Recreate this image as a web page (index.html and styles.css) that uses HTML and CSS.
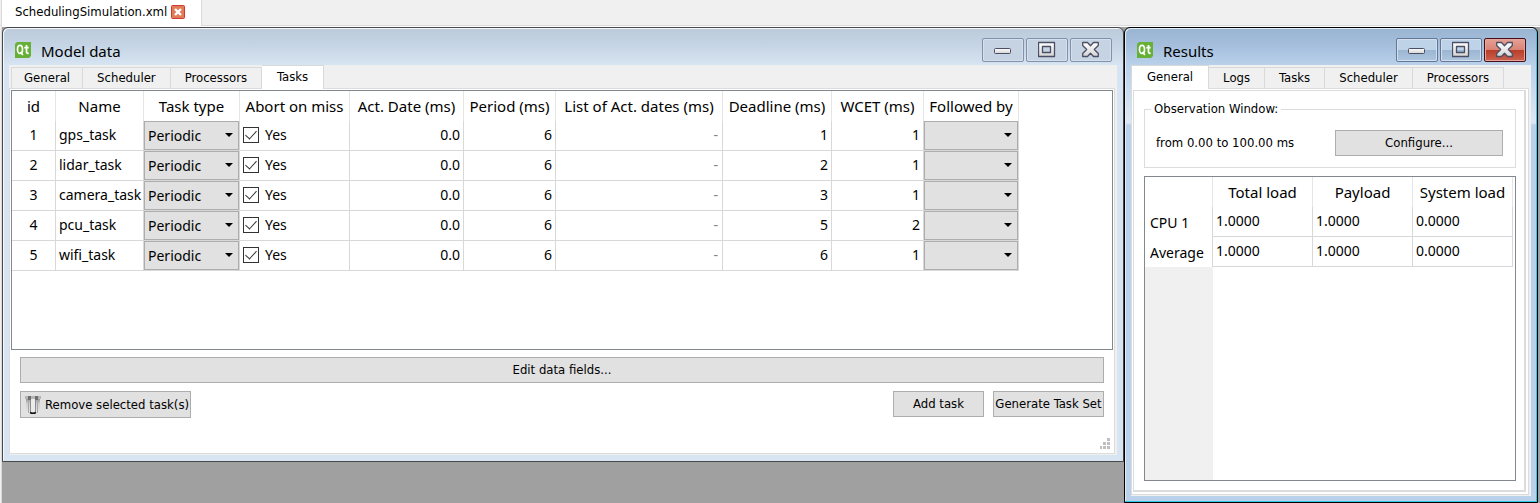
FILE: index.html
```html
<!DOCTYPE html>
<html lang="en">
<head>
<meta charset="utf-8">
<title>SchedulingSimulation.xml</title>
<link rel="stylesheet" href="styles.css">
</head>
<body>
<svg class="defs" aria-hidden="true">
  <defs>
    <linearGradient id="metal" x1="0" y1="0" x2="0" y2="1"><stop offset="0" stop-color="#fff"/><stop offset="1" stop-color="#d4d4d4"/></linearGradient>
    <linearGradient id="bin-body" x1="0" y1="0" x2="0" y2="1"><stop offset="0" stop-color="#8a8a8a"/><stop offset=".35" stop-color="#cfcfcf"/><stop offset="1" stop-color="#e8e8e8"/></linearGradient>
    <symbol id="qt" viewBox="0 0 16 16"><path d="M2 0h14v14l-2 2H0V2z" fill="#66b036"/><g fill="none" stroke="#fff" stroke-width="1.7"><ellipse cx="5" cy="7.400" rx="2.500" ry="4"/><path d="M5.500 10l2.400 3"/><path d="M11.500 3v7q0 1.600 2.200 1.200M9.300 5.700h4.400"/></g></symbol>
    <symbol id="min" viewBox="0 0 18 18"><rect x=".5" y="7.500" width="16" height="5" rx="1" fill="url(#metal)" stroke="#4c4f63"/></symbol>
    <symbol id="max" viewBox="0 0 18 18"><path d="M.5 1.500h16v14h-16zM4.500 5.500v6h8v-6z" fill="url(#metal)" fill-rule="evenodd" stroke="#4c4f63" stroke-width="1.300" stroke-linejoin="round"/></symbol>
    <symbol id="cross" viewBox="0 0 18 18"><path d="M.7 1.500h4.800L8.500 4.700l3-3.200h4.800v3L12.300 8.500l4 4v3h-4.800l-3-3.200-3 3.200H.7v-3l4-4-4-4z" fill="url(#metal)" stroke="#4c4f63" stroke-width="1.300" stroke-linejoin="round"/></symbol>
  </defs>
</svg>
<header class="documents">
  <div class="document">
    <span>SchedulingSimulation.xml</span>
    <button class="document-close" aria-label="Close document"><svg viewBox="0 0 14 14"><rect x=".5" y=".5" width="13" height="13" rx="1" fill="#e27c58" stroke="#d0382e"/><path d="M4 4l6 6M10 4l-6 6" stroke="#fff" stroke-width="2.400"/></svg></button>
  </div>
</header>
<main class="desktop">
  <section class="window model" aria-label="Model data">
    <div class="titlebar">
      <svg class="logo"><use href="#qt"/></svg>
      <h1>Model data</h1>
      <div class="controls">
        <button aria-label="Minimize"><svg><use href="#min"/></svg></button>
        <button aria-label="Maximize"><svg><use href="#max"/></svg></button>
        <button aria-label="Close"><svg><use href="#cross"/></svg></button>
      </div>
    </div>
    <div class="client">
      <div class="tabs" role="tablist">
        <button role="tab">General</button><button role="tab">Scheduler</button><button role="tab">Processors</button><button role="tab" aria-selected="true">Tasks</button>
      </div>
      <div class="pane">
        <div class="frame task-frame">
          <table class="grid tasks">
            <colgroup><col class="c-id"><col class="c-name"><col class="c-type"><col class="c-abort"><col class="c-act"><col class="c-period"><col class="c-list"><col class="c-deadline"><col class="c-wcet"><col class="c-follow"></colgroup>
            <thead><tr><th>id</th><th>Name</th><th>Task type</th><th>Abort on miss</th><th>Act. Date (ms)</th><th>Period (ms)</th><th>List of Act. dates (ms)</th><th>Deadline (ms)</th><th>WCET (ms)</th><th>Followed by</th></tr></thead>
            <tbody>
              <tr><td class="center">1</td><td>gps_task</td><td class="field"><div class="combo"><select aria-label="Task type 1"><option>Periodic</option></select></div></td><td class="abort"><label><input type="checkbox" checked>Yes</label></td><td class="num">0.0</td><td class="num">6</td><td class="num none">-</td><td class="num">1</td><td class="num">1</td><td class="field"><div class="combo"><select aria-label="Followed by 1"><option></option></select></div></td></tr>
              <tr><td class="center">2</td><td>lidar_task</td><td class="field"><div class="combo"><select aria-label="Task type 2"><option>Periodic</option></select></div></td><td class="abort"><label><input type="checkbox" checked>Yes</label></td><td class="num">0.0</td><td class="num">6</td><td class="num none">-</td><td class="num">2</td><td class="num">1</td><td class="field"><div class="combo"><select aria-label="Followed by 2"><option></option></select></div></td></tr>
              <tr><td class="center">3</td><td>camera_task</td><td class="field"><div class="combo"><select aria-label="Task type 3"><option>Periodic</option></select></div></td><td class="abort"><label><input type="checkbox" checked>Yes</label></td><td class="num">0.0</td><td class="num">6</td><td class="num none">-</td><td class="num">3</td><td class="num">1</td><td class="field"><div class="combo"><select aria-label="Followed by 3"><option></option></select></div></td></tr>
              <tr><td class="center">4</td><td>pcu_task</td><td class="field"><div class="combo"><select aria-label="Task type 4"><option>Periodic</option></select></div></td><td class="abort"><label><input type="checkbox" checked>Yes</label></td><td class="num">0.0</td><td class="num">6</td><td class="num none">-</td><td class="num">5</td><td class="num">2</td><td class="field"><div class="combo"><select aria-label="Followed by 4"><option></option></select></div></td></tr>
              <tr><td class="center">5</td><td>wifi_task</td><td class="field"><div class="combo"><select aria-label="Task type 5"><option>Periodic</option></select></div></td><td class="abort"><label><input type="checkbox" checked>Yes</label></td><td class="num">0.0</td><td class="num">6</td><td class="num none">-</td><td class="num">6</td><td class="num">1</td><td class="field"><div class="combo"><select aria-label="Followed by 5"><option></option></select></div></td></tr>
            </tbody>
          </table>
        </div>
        <div class="actions">
          <button class="push wide">Edit data fields...</button>
          <div class="action-row">
            <button class="push remove"><svg class="bin" viewBox="0 0 16 20"><path d="M1 3h14v16H1z" fill="url(#bin-body)"/><path d="M0 1h16v3H0z" fill="#b5b5b5"/><path d="M3 1h3v4H3zM10 1h3v4h-3z" fill="#6e6e6e"/><path d="M6 4h4v13H6z" fill="#ececec"/><path d="M3.500 5v13M12.500 5v13" stroke="#a8a8a8"/><path d="M5.500 5v12M10.500 5v12" stroke="#8c8c8c"/><path d="M5 17.500q3 1.500 6 0" fill="none" stroke="#111" stroke-width="1.500"/></svg>Remove selected task(s)</button>
            <button class="push add">Add task</button>
            <button class="push generate">Generate Task Set</button>
          </div>
        </div>
        <svg class="grip" viewBox="0 0 11 11" aria-hidden="true"><path d="M8 0h3v3H8zM4 4h3v3H4zM8 4h3v3H8zM1 8h2v3H1zM4 8h3v3H4zM8 8h3v3H8z" fill="#bfbfbf"/></svg>
      </div>
    </div>
  </section>
  <section class="window results" aria-label="Results">
    <div class="titlebar">
      <svg class="logo"><use href="#qt"/></svg>
      <h2>Results</h2>
      <div class="controls">
        <button aria-label="Minimize"><svg><use href="#min"/></svg></button>
        <button aria-label="Maximize"><svg><use href="#max"/></svg></button>
        <button class="danger" aria-label="Close"><svg><use href="#cross"/></svg></button>
      </div>
    </div>
    <div class="client">
      <div class="tabs" role="tablist">
        <button role="tab" aria-selected="true">General</button><button role="tab">Logs</button><button role="tab">Tasks</button><button role="tab">Scheduler</button><button role="tab">Processors</button>
      </div>
      <div class="pane">
        <div class="page">
          <fieldset>
            <legend>Observation Window:</legend>
            <span>from 0.00 to 100.00 ms</span>
            <button class="push configure">Configure...</button>
          </fieldset>
          <div class="frame load-frame">
            <table class="grid loads">
              <colgroup><col class="c-cpu"><col class="c-load"><col class="c-load"><col class="c-load"></colgroup>
              <thead><tr><td class="corner"></td><th>Total load</th><th>Payload</th><th>System load</th></tr></thead>
              <tbody>
                <tr><th scope="row">CPU 1</th><td>1.0000</td><td>1.0000</td><td>0.0000</td></tr>
                <tr><th scope="row">Average</th><td>1.0000</td><td>1.0000</td><td>0.0000</td></tr>
              </tbody>
            </table>
            <div class="header-fill"></div>
          </div>
        </div>
      </div>
    </div>
  </section>
</main>
</body>
</html>
```
FILE: styles.css
```css
* { box-sizing: border-box; }
body {
  margin: 0;
  min-height: 100vh;
  display: flex;
  flex-direction: column;
  background: #f0f0f0;
  color: #000;
  font: 13px/16px "DejaVu Sans Condensed", "Noto Sans", sans-serif;
}
button, select, input { font: inherit; color: inherit; margin: 0; }
svg { display: block; }
.defs { position: absolute; width: 0; height: 0; }

.documents { display: flex; height: 26px; border-bottom: 1px solid #dadada; padding-left: 1px; }
.document {
  display: flex;
  align-items: center;
  gap: 4px;
  height: 26px;
  padding: 0 16px 2px 13px;
  background: #fff;
  border: solid #dadada;
  border-width: 0 1px;
}
.document-close { width: 14px; height: 14px; padding: 0; border: 0; background: none; }

.desktop {
  flex: 1;
  display: grid;
  grid-template-columns: 1122fr 414fr;
  align-items: start;
  margin-left: 1px;
  padding-right: 2px;
  background: #a0a0a0;
  border-left: 1px solid #dadada;
  border-top: 1px solid #fff;
}
.window {
  display: flex;
  flex-direction: column;
  min-width: 0;
  padding: 0 6px 6px;
  border: 1px solid #47474c;
  border-radius: 6px 6px 0 0;
}
.model {
  background: linear-gradient(#bccad9, #c6d5e5 18px, #d7e4f2 37px);
  box-shadow: inset 1px 1px #f5f8fb;
}
.results {
  align-self: stretch;
  border-color: #000;
  background: linear-gradient(#99b4d1, #a5bfdd 18px, #b9d1ea 37px, #dce8f5 95px, #b9d1ea 97px);
  box-shadow: inset -1px -1px #32c5e6, inset 1px 1px #e4edf6;
}
.titlebar { display: flex; align-items: center; height: 37px; padding: 8px 5px 0 6px; }
.logo { width: 16px; height: 16px; margin-bottom: 2px; }
.titlebar h1, .titlebar h2 { flex: 1; margin: 0 0 0 10px; font: 15px/20px "Noto Sans", sans-serif; }
.controls { display: flex; gap: 2px; margin-bottom: 2px; }
.controls button {
  display: grid;
  place-items: center;
  width: 42px;
  height: 24px;
  padding: 0;
  background: #c5d3e2;
  border: 1px solid #8091ab;
  border-radius: 2px;
  box-shadow: inset 0 0 0 1px #d5e0ec;
}
.controls svg { width: 18px; height: 18px; }
.results .controls button {
  background: linear-gradient(#bfd3e8 50%, #9bb6d2 50%, #aec6e0);
  border-color: #62789a;
}
.results .controls .danger {
  background: linear-gradient(#e5a195, #d98374 50%, #b83d28 50%, #cc6250);
  border-color: #45101c;
  box-shadow: inset 0 0 0 1px #e5a59b;
}

.client { flex: 1; display: flex; flex-direction: column; padding: 0 2px 1px 0; background: #f0f0f0; }
.tabs { display: flex; align-items: flex-end; height: 23px; padding-left: 2px; }
.tabs button {
  height: 21px;
  padding: 0 14px;
  background: #f0f0f0;
  border: solid #d9d9d9;
  border-width: 1px 1px 0 0;
  white-space: nowrap;
}
.tabs button:first-child { border-left-width: 1px; padding: 0 12px; }
.tabs button[aria-selected] { height: 24px; margin-bottom: -1px; padding: 0 15px 2px; background: #fff; z-index: 1; }
.results .tabs { padding-left: 0; }
.pane { flex: 1; display: flex; flex-direction: column; background: #fff; border: 1px solid #dcdcdc; padding: 1px; }
.results .pane { padding: 1px 2px 2px 1px; }
.page { flex: 1; display: flex; flex-direction: column; gap: 8px; padding: 10px 8px 9px 10px; border: solid #dcdcdc; border-width: 1px 2px 2px 1px; }

.frame { border: 1px solid #828790; background: #fff; }
.task-frame { height: 260px; }
.load-frame { flex: 1; display: flex; flex-direction: column; }
.header-fill { flex: 1; width: 68px; background: #f0f0f0; }
.grid { table-layout: fixed; border-collapse: separate; border-spacing: 0; font: 14px/20px "Noto Sans", sans-serif; }
.grid tr { height: 30px; }
.grid th, .grid td { height: 30px; padding: 0 3px 1px; border: solid #d8d8d8; border-width: 0 1px 1px 0; text-align: left; white-space: nowrap; font-weight: 400; }
.grid thead th { padding: 0; border-color: #e5e5e5; border-bottom: 0; font-size: 15px; text-align: center; }
.grid td.center { text-align: center; }
.grid td.num { text-align: right; }
.grid td.none { color: #808080; padding-right: 4px; }
.grid td.field { padding: 0; }
.tasks { width: 1007px; }
.c-id { width: 44px; } .c-name { width: 88px; } .c-type { width: 96px; }
.c-abort { width: 110px; } .c-act { width: 114px; } .c-period { width: 92px; }
.c-list { width: 167px; } .c-deadline { width: 109px; } .c-wcet { width: 92px; } .c-follow { width: 95px; }
.loads { width: 368px; }
.c-cpu { width: 68px; } .c-load { width: 100px; }
.grid td.corner { border-bottom: 0; border-color: #e5e5e5; }
.loads tbody th { padding: 2px 0 0 5px; border-bottom: 0; }
.combo { position: relative; height: 29px; }
.combo select { appearance: none; display: block; width: 100%; height: 29px; padding: 0 3px; background: #e1e1e1; border: 1px solid #adadad; border-radius: 0; }
.combo::after { content: ""; position: absolute; right: 6px; top: 12px; width: 8px; height: 4px; background: #000; clip-path: polygon(0 0, 100% 0, 50% 100%); pointer-events: none; }
.abort label { display: flex; align-items: center; gap: 6px; }
.abort input { appearance: none; display: grid; place-items: center; width: 16px; height: 16px; background: #fff; border: 1px solid #333; }
.abort input:checked::before { content: ""; width: 5px; height: 10px; margin-bottom: 3px; border: solid #333; border-width: 0 1px 1px 0; transform: rotate(42deg); }

.push { height: 26px; padding: 0; background: #e1e1e1; border: 1px solid #adadad; border-radius: 0; white-space: nowrap; }
.actions { display: grid; gap: 8px; padding: 7px 9px 0; }
.action-row { display: flex; gap: 9px; align-items: flex-start; }
.remove { display: flex; align-items: center; gap: 4px; width: 171px; height: 27px; padding: 0 4px; }
.bin { flex: none; width: 16px; height: 20px; }
.add { width: 91px; margin-left: auto; }
.generate { width: 111px; }
.grip { width: 11px; height: 11px; margin: auto 3px 3px auto; }
.model .pane { min-height: 366px; }

fieldset { display: flex; align-items: center; justify-content: space-between; min-width: 0; height: 67px; margin: 0; padding: 13px 12px 0 11px; border: 1px solid #dcdcdc; }
legend { margin-left: -5px; padding: 0 3px; }
.configure { width: 168px; }
```
